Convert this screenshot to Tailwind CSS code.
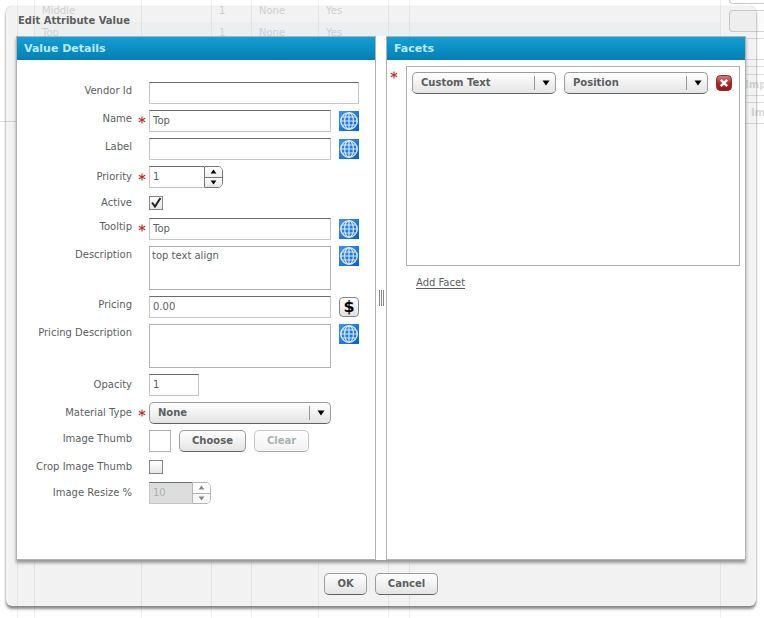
<!DOCTYPE html>
<html lang="en">

<head>
    <meta charset="UTF-8">
    <meta name="viewport" content="width=device-width, initial-scale=1.0">
    <title>Edit Attribute Value</title>
    <script src="https://cdn.jsdelivr.net/npm/@tailwindcss/browser@4"></script>
</head>

<body class="relative min-h-screen bg-white font-['DejaVu_Sans',Verdana,sans-serif] text-[10px] text-[#5c5f61]">

    <!-- shared icons -->
    <svg class="absolute size-0">
        <defs>
            <linearGradient id="blue" x1="0" y1="0" x2="1" y2="1">
                <stop offset="0" stop-color="#3f93ee" />
                <stop offset="1" stop-color="#0560da" />
            </linearGradient>
            <linearGradient id="red" x1="0" y1="0" x2="0" y2="1">
                <stop offset="0" stop-color="#d98080" />
                <stop offset="0.5" stop-color="#b52a2a" />
                <stop offset="1" stop-color="#9c1010" />
            </linearGradient>
            <symbol id="globe" viewBox="0 0 20 20">
                <rect width="20" height="20" fill="url(#blue)" />
                <g fill="none" stroke="#d8e8fd" stroke-width="1.2">
                    <circle cx="10" cy="10" r="8.2" stroke-width="1.5" />
                    <ellipse cx="10" cy="10" rx="4.4" ry="8.2" />
                    <path d="M10 2v16M2 10h16M3.4 6h13.2M3.4 14h13.2" />
                </g>
            </symbol>
            <symbol id="star" viewBox="0 0 8 8">
                <path d="M4 .5v7M.8 2.2l6.4 3.6M7.2 2.2L.8 5.8" stroke="#cc2222" stroke-width="1.1" fill="none" />
            </symbol>
            <symbol id="down" viewBox="0 0 8 6">
                <path d="M.5 .5h7L4 5.5z" fill="currentColor" />
            </symbol>
            <symbol id="up" viewBox="0 0 8 6">
                <path d="M.5 5.5h7L4 .5z" fill="currentColor" />
            </symbol>
        </defs>
    </svg>

    <!-- dimmed page behind the dialog -->
    <div class="absolute inset-0 flex overflow-hidden text-[#dadcdd]" aria-hidden="true">
        <div class="w-[18px] shrink-0 border-r border-[#f0f0f0]">
            <div class="h-[122px] border-b border-[#dddddd]"></div>
        </div>
        <div class="w-4 shrink-0"></div>
        <table class="h-full flex-1 table-fixed border-collapse">
            <colgroup>
                <col class="w-[107px]">
                <col class="w-[70px]">
                <col class="w-[40px]">
                <col class="w-[67px]">
                <col class="w-[70px]">
                <col class="w-[21px]">
                <col>
            </colgroup>
            <tr class="h-[22px] *:border-x *:border-[#f0f0f0] *:px-[7px] *:pb-0.5">
                <td>Middle</td>
                <td></td>
                <td>1</td>
                <td>None</td>
                <td>Yes</td>
                <td></td>
                <td></td>
            </tr>
            <tr class="h-[22px] bg-[#f8fcfd] *:border-x *:border-[#f0f0f0] *:px-[7px] *:pb-0.5">
                <td>Top</td>
                <td></td>
                <td>1</td>
                <td>None</td>
                <td>Yes</td>
                <td></td>
                <td></td>
            </tr>
            <tr class="*:border-x *:border-[#f0f0f0]">
                <td></td>
                <td></td>
                <td></td>
                <td></td>
                <td></td>
                <td></td>
                <td></td>
            </tr>
        </table>
        <div class="flex w-[43px] shrink-0 flex-col font-bold">
            <div class="ml-2 h-1 rounded-bl border-b border-l border-[#cccccc]"></div>
            <div class="mt-1.5 ml-2 h-[22px] rounded-l border-y border-l border-[#d4d4d4] bg-[#fbfbfb]"></div>
            <div class="mt-1.5 h-[22px] border-y border-[#dddddd]"></div>
            <div class="mt-1.5 h-2 border-t border-[#dddddd]"></div>
            <div class="h-[22px] border-y border-[#dddddd] pl-6 leading-5 whitespace-nowrap">Imp</div>
            <div class="mt-1.5 h-[22px] border-y border-[#dddddd] pl-[30px] leading-5 whitespace-nowrap">Im</div>
        </div>
    </div>

    <div class="pt-1.5 pr-2 pb-3 pl-1.5">
        <div role="dialog" aria-labelledby="title"
            class="relative rounded-md bg-black/5 px-2.5 pb-[11px] shadow-[0_3px_3px_#888888,0_0_1px_#aaaaaa]">
            <h1 id="title" class="h-[30px] pl-0.5 leading-[30px] font-bold">Edit Attribute Value</h1>

            <div class="flex bg-white shadow-[0_3px_3px_#999999]">

                <!-- value details -->
                <section class="flex-1 border border-[#b0b3b4]">
                    <h2 class="h-[23px] bg-linear-to-b from-[#139ed6] to-[#0380b4] pl-[7px] text-[11px] leading-[23px] font-bold text-[#b9eaff]">Value Details</h2>
                    <form class="flex flex-col gap-1.5 pt-[22px] pr-4 pb-[55px]">
                        <div class="flex min-h-[22px]">
                            <label for="vendor" class="w-[115px] text-right leading-[18px]">Vendor Id</label>
                            <span class="w-[17px]"></span>
                            <input id="vendor" type="text" class="h-[22px] min-w-0 flex-1 border border-[#c4c6c7] border-t-[#6a6c6e] bg-white px-[3px]">
                        </div>
                        <div class="flex min-h-[22px]">
                            <label for="name" class="w-[115px] text-right leading-[18px]">Name</label>
                            <span class="w-[17px] pt-1.5 pl-1.5"><svg class="size-2"><use href="#star" /></svg></span>
                            <input id="name" type="text" value="Top" class="h-[22px] min-w-0 flex-1 border border-[#c4c6c7] border-t-[#6a6c6e] bg-white px-[3px] pb-0.5">
                            <button type="button" aria-label="Translate name" class="mt-px ml-2 size-5"><svg class="size-5"><use href="#globe" /></svg></button>
                        </div>
                        <div class="flex min-h-[22px]">
                            <label for="label" class="w-[115px] text-right leading-[18px]">Label</label>
                            <span class="w-[17px]"></span>
                            <input id="label" type="text" class="h-[22px] min-w-0 flex-1 border border-[#c4c6c7] border-t-[#6a6c6e] bg-white px-[3px]">
                            <button type="button" aria-label="Translate label" class="mt-px ml-2 size-5"><svg class="size-5"><use href="#globe" /></svg></button>
                        </div>
                        <div class="flex min-h-[22px]">
                            <label for="priority" class="w-[115px] text-right leading-[22px]">Priority</label>
                            <span class="w-[17px] pt-[7px] pl-1.5"><svg class="size-2"><use href="#star" /></svg></span>
                            <input id="priority" type="text" value="1" class="h-[22px] w-[55px] border border-r-0 border-[#c4c6c7] border-t-[#6a6c6e] bg-white px-[3px] pb-0.5">
                            <div class="flex h-[22px] w-[19px] flex-col overflow-hidden rounded-r-[5px] border border-[#77797b] text-black">
                                <button type="button" aria-label="Increase priority" class="flex flex-1 items-center justify-center border-b border-[#77797b] bg-linear-to-b from-white to-[#eeeeee]"><svg class="h-[5px] w-[7px]"><use href="#up" /></svg></button>
                                <button type="button" aria-label="Decrease priority" class="flex flex-1 items-center justify-center bg-linear-to-b from-white to-[#e4e4e4]"><svg class="h-[5px] w-[7px]"><use href="#down" /></svg></button>
                            </div>
                        </div>
                        <div class="flex h-[18px]">
                            <label for="active" class="w-[132px] pr-[17px] text-right leading-[18px]">Active</label>
                            <span class="relative mt-0.5 size-3.5">
                                <input id="active" type="checkbox" checked class="peer block size-3.5 appearance-none border border-[#85878a] bg-linear-to-b from-white to-[#e6e6e6]">
                                <svg class="pointer-events-none absolute inset-0 hidden size-3.5 peer-checked:block" viewBox="0 0 14 14"><path d="M3 6.5l3 4L11.5 2" fill="none" stroke="#222222" stroke-width="2" /></svg>
                            </span>
                        </div>
                        <div class="flex min-h-[22px]">
                            <label for="tooltip" class="w-[115px] text-right leading-[18px]">Tooltip</label>
                            <span class="w-[17px] pt-1.5 pl-1.5"><svg class="size-2"><use href="#star" /></svg></span>
                            <input id="tooltip" type="text" value="Top" class="h-[22px] min-w-0 flex-1 border border-[#c4c6c7] border-t-[#6a6c6e] bg-white px-[3px] pb-0.5">
                            <button type="button" aria-label="Translate tooltip" class="mt-px ml-2 size-5"><svg class="size-5"><use href="#globe" /></svg></button>
                        </div>
                        <div class="flex">
                            <label for="description" class="w-[115px] text-right leading-[18px]">Description</label>
                            <span class="w-[17px]"></span>
                            <textarea id="description" class="h-11 min-w-0 flex-1 resize-none border border-[#b0b3b4] bg-white px-0.5 leading-[18px]">top text align</textarea>
                            <button type="button" aria-label="Translate description" class="ml-2 size-5"><svg class="size-5"><use href="#globe" /></svg></button>
                        </div>
                        <div class="flex min-h-[22px]">
                            <label for="pricing" class="w-[115px] text-right leading-[18px]">Pricing</label>
                            <span class="w-[17px]"></span>
                            <input id="pricing" type="text" value="0.00" class="h-[22px] min-w-0 flex-1 border border-[#c4c6c7] border-t-[#6a6c6e] bg-white px-[3px] pb-0.5">
                            <button type="button" class="mt-px ml-2 size-5 rounded border border-[#85878a] bg-linear-to-b from-white to-[#e2e2e2] text-base leading-[18px] font-bold text-black">$</button>
                        </div>
                        <div class="flex">
                            <label for="pricing-description" class="w-[115px] text-right leading-[18px]">Pricing Description</label>
                            <span class="w-[17px]"></span>
                            <textarea id="pricing-description" class="h-11 min-w-0 flex-1 resize-none border border-[#b0b3b4] bg-white px-0.5 leading-[18px]"></textarea>
                            <button type="button" aria-label="Translate pricing description" class="ml-2 size-5"><svg class="size-5"><use href="#globe" /></svg></button>
                        </div>
                        <div class="flex min-h-[22px]">
                            <label for="opacity" class="w-[115px] text-right leading-[22px]">Opacity</label>
                            <span class="w-[17px]"></span>
                            <input id="opacity" type="text" value="1" class="h-[22px] w-[50px] border border-[#c4c6c7] border-t-[#6a6c6e] bg-white px-[3px] pb-0.5">
                        </div>
                        <div class="flex min-h-[22px]">
                            <label for="material" class="w-[115px] text-right leading-[22px]">Material Type</label>
                            <span class="w-[17px] pt-[7px] pl-1.5"><svg class="size-2"><use href="#star" /></svg></span>
                            <div class="relative mr-7 min-w-0 flex-1">
                                <select id="material" class="block h-[22px] w-full appearance-none rounded-[5px] border border-[#9a9c9e] border-b-[#606264] bg-linear-to-b from-white to-[#e4e4e4] px-2 pb-px font-bold">
                                    <option>None</option>
                                </select>
                                <span class="pointer-events-none absolute inset-y-1 right-0 flex w-[22px] items-center justify-center border-l border-[#999999] text-black"><svg class="h-1.5 w-2"><use href="#down" /></svg></span>
                            </div>
                        </div>
                        <div class="flex min-h-[22px]">
                            <span class="w-[132px] pr-[17px] text-right leading-[18px]">Image Thumb</span>
                            <span class="size-[22px] border border-[#b0b3b4] bg-white"></span>
                            <button type="button" class="ml-2 h-[22px] w-[67px] rounded-[5px] border border-[#9a9c9e] border-b-[#606264] bg-linear-to-b from-white to-[#e4e4e4] pb-0.5 font-bold">Choose</button>
                            <button type="button" disabled class="ml-2 h-[22px] w-[55px] rounded-[5px] border border-[#c4c6c7] border-b-[#a8aaac] bg-linear-to-b from-white to-[#f2f2f2] pb-0.5 font-bold text-[#aab3b3]">Clear</button>
                        </div>
                        <div class="flex h-[18px]">
                            <label for="crop" class="w-[132px] pr-[17px] text-right leading-[18px]">Crop Image Thumb</label>
                            <span class="relative mt-0.5 size-3.5">
                                <input id="crop" type="checkbox" class="peer block size-3.5 appearance-none border border-[#85878a] bg-linear-to-b from-white to-[#e6e6e6]">
                                <svg class="pointer-events-none absolute inset-0 hidden size-3.5 peer-checked:block" viewBox="0 0 14 14"><path d="M3 6.5l3 4L11.5 2" fill="none" stroke="#222222" stroke-width="2" /></svg>
                            </span>
                        </div>
                        <div class="flex min-h-[22px]">
                            <label for="resize" class="w-[132px] pr-[17px] text-right leading-[22px]">Image Resize %</label>
                            <input id="resize" type="text" value="10" disabled class="h-[22px] w-[43px] border border-r-0 border-[#c4c6c7] border-t-[#6a6c6e] bg-[#dddddd] px-[3px] pb-0.5 text-[#aab3b3]">
                            <div class="flex h-[22px] w-[19px] flex-col overflow-hidden rounded-r-[5px] border border-[#b4b6b8] text-[#888888]">
                                <button type="button" disabled aria-label="Increase image resize" class="flex flex-1 items-center justify-center border-b border-[#b4b6b8] bg-white"><svg class="h-[5px] w-[7px]"><use href="#up" /></svg></button>
                                <button type="button" disabled aria-label="Decrease image resize" class="flex flex-1 items-center justify-center bg-[#f7f7f7]"><svg class="h-[5px] w-[7px]"><use href="#down" /></svg></button>
                            </div>
                        </div>
                    </form>
                </section>

                <!-- divider grip -->
                <div class="flex w-2.5 items-center justify-center">
                    <div class="flex h-4 w-[5px] justify-between">
                        <i class="w-px bg-[#888888]"></i>
                        <i class="w-px bg-[#888888]"></i>
                        <i class="w-px bg-[#888888]"></i>
                    </div>
                </div>

                <!-- facets -->
                <section class="flex-1 border border-[#b0b3b4]">
                    <h2 class="h-[23px] bg-linear-to-b from-[#139ed6] to-[#0380b4] pl-[7px] text-[11px] leading-[23px] font-bold text-[#b9eaff]">Facets</h2>
                    <div class="flex pt-1.5 pr-[5px]">
                        <span class="w-[19px] pt-[5px] pl-[3px]"><svg class="size-2"><use href="#star" /></svg></span>
                        <div class="h-[200px] min-w-0 flex-1 border border-[#b0b3b4] pt-[5px] pr-[7px] pl-[5px]">
                            <div class="flex items-center gap-2">
                                <div class="relative min-w-0 flex-1">
                                    <select aria-label="Facet" class="block h-[22px] w-full appearance-none rounded-[5px] border border-[#9a9c9e] border-b-[#606264] bg-linear-to-b from-white to-[#e4e4e4] px-2 pb-px font-bold">
                                        <option>Custom Text</option>
                                    </select>
                                    <span class="pointer-events-none absolute inset-y-1 right-0 flex w-[22px] items-center justify-center border-l border-[#999999] text-black"><svg class="h-1.5 w-2"><use href="#down" /></svg></span>
                                </div>
                                <div class="relative min-w-0 flex-1">
                                    <select aria-label="Facet value" class="block h-[22px] w-full appearance-none rounded-[5px] border border-[#9a9c9e] border-b-[#606264] bg-linear-to-b from-white to-[#e4e4e4] px-2 pb-px font-bold">
                                        <option>Position</option>
                                    </select>
                                    <span class="pointer-events-none absolute inset-y-1 right-0 flex w-[22px] items-center justify-center border-l border-[#999999] text-black"><svg class="h-1.5 w-2"><use href="#down" /></svg></span>
                                </div>
                                <button type="button" aria-label="Remove facet" class="size-4">
                                    <svg class="size-4" viewBox="0 0 16 16">
                                        <rect x=".5" y=".5" width="15" height="15" rx="4" fill="url(#red)" stroke="#8d2a2a" />
                                        <path d="M4.8 4.8l6.4 6.4M11.2 4.8l-6.4 6.4" stroke="#ffffff" stroke-width="2.4" />
                                    </svg>
                                </button>
                            </div>
                        </div>
                    </div>
                    <a href="#" class="mt-2 ml-[29px] inline-block leading-[18px] underline underline-offset-2">Add Facet</a>
                </section>
            </div>

            <div class="flex justify-center gap-2 pt-[13px]">
                <button type="button" class="h-[22px] w-[43px] rounded-[5px] border border-[#9a9c9e] border-b-[#606264] bg-linear-to-b from-white to-[#e4e4e4] pb-0.5 font-bold">OK</button>
                <button type="button" class="h-[22px] w-[63px] rounded-[5px] border border-[#9a9c9e] border-b-[#606264] bg-linear-to-b from-white to-[#e4e4e4] pb-0.5 font-bold">Cancel</button>
            </div>
        </div>
    </div>

</body>

</html>
